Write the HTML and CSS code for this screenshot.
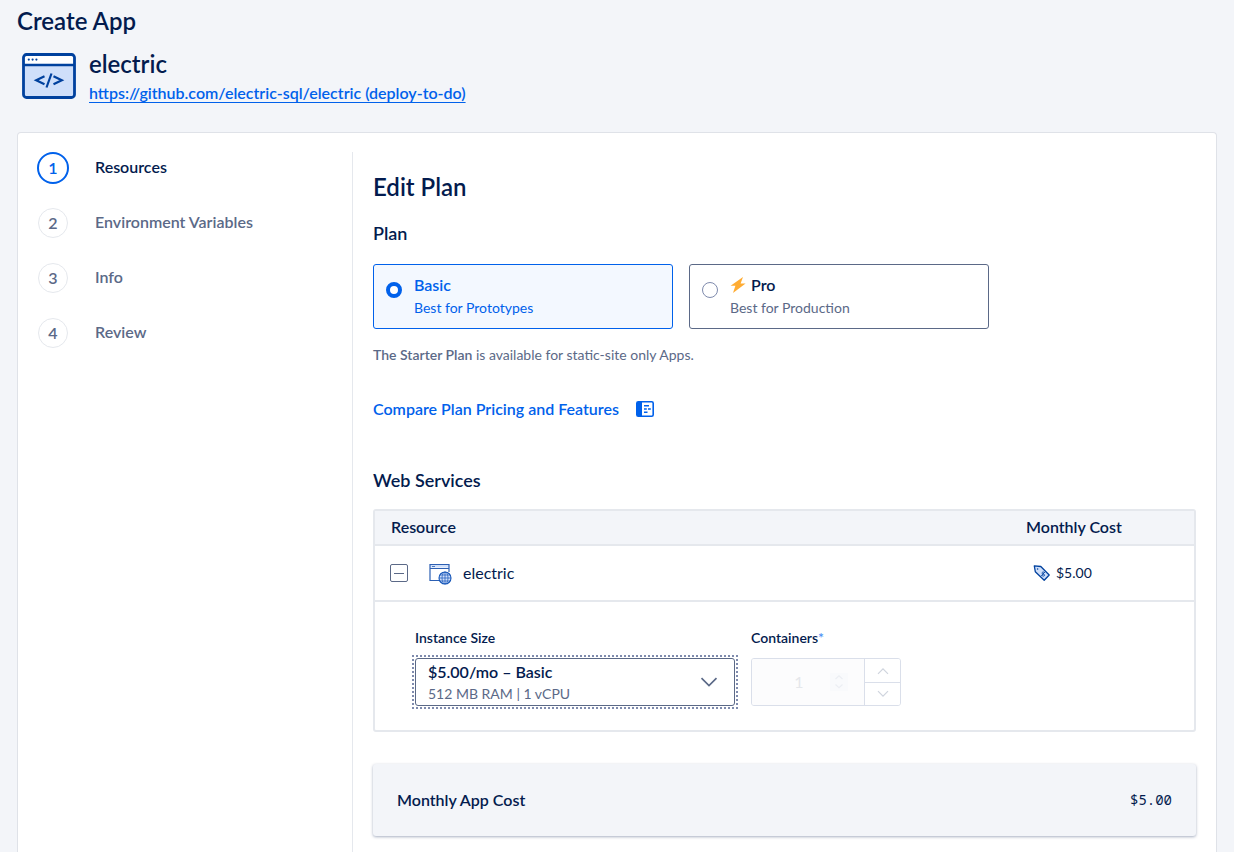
FILE: index.html
```html
<!DOCTYPE html>
<html lang="en">
<head>
<meta charset="utf-8">
<meta name="viewport" content="width=device-width, initial-scale=1">
<title>Create App</title>
<link rel="stylesheet" href="styles.css">
</head>
<body>
<header class="page-header">
  <h1 class="page-title">Create App</h1>
  <div class="app">
    <svg class="app-icon" viewBox="0 0 54 46" aria-hidden="true">
      <rect x="1.5" y="1.5" width="51" height="43" rx="3" fill="#cfdffa"/>
      <path d="M2 12V4a2 2 0 0 1 2-2h46a2 2 0 0 1 2 2v8z" fill="#fff"/>
      <rect x="1.5" y="1.5" width="51" height="43" rx="3" fill="none" stroke="#00419e" stroke-width="2.8"/>
      <path d="M2 12h50" stroke="#00419e" stroke-width="2.4"/>
      <g fill="#00419e"><circle cx="6.8" cy="6.6" r="1.1"/><circle cx="10.6" cy="6.6" r="1.1"/><circle cx="14.4" cy="6.6" r="1.1"/></g>
      <path d="M22.5 23.2l-8.3 4 8.3 4M31.500 23.200l8.300 4-8.300 4M29.500 20.500l-5 14" fill="none" stroke="#00419e" stroke-width="2.2"/>
    </svg>
    <div>
      <h2 class="app-name">electric</h2>
      <a class="app-link" href="#">https://github.com/electric-sql/electric (deploy-to-do)</a>
    </div>
  </div>
</header>

<div class="card">
  <nav aria-label="Steps">
    <ol class="steps">
      <li class="step step-active" aria-current="step"><span class="step-cell"><span class="step-number">1</span></span>Resources</li>
      <li class="step"><span class="step-cell"><span class="step-number">2</span></span>Environment Variables</li>
      <li class="step"><span class="step-cell"><span class="step-number">3</span></span>Info</li>
      <li class="step"><span class="step-cell"><span class="step-number">4</span></span>Review</li>
    </ol>
  </nav>

  <main class="main">
    <h2 class="main-title">Edit Plan</h2>
    <h3 class="section-title" id="plan-title">Plan</h3>
    <div class="plans" role="radiogroup" aria-labelledby="plan-title">
      <label class="plan plan-selected">
        <input class="radio" type="radio" name="plan" checked>
        <span class="plan-text"><span class="plan-name">Basic</span><span class="plan-note">Best for Prototypes</span></span>
      </label>
      <label class="plan">
        <input class="radio" type="radio" name="plan">
        <span class="plan-text">
          <span class="plan-name"><svg class="bolt" viewBox="0 0 16 16" aria-hidden="true"><path d="M13 0L.6 8.800h4.800L3 16 15.600 6.400h-5z" fill="#ffac33"/></svg>Pro</span>
          <span class="plan-note">Best for Production</span>
        </span>
      </label>
    </div>
    <p class="starter"><strong>The Starter Plan</strong> is available for static-site only Apps.</p>
    <a class="compare" href="#">Compare Plan Pricing and Features
      <svg class="compare-icon" viewBox="0 0 20 18" aria-hidden="true">
        <rect x="1.800" y="1.800" width="16.400" height="14.400" rx="1.500" fill="none" stroke="#0061eb" stroke-width="1.600"/>
        <path d="M2 2h5v14H2z" fill="#0061eb"/>
        <path d="M9 5.800h5M9 9h2.800M13 9h2.800M9 12.200h3.500" stroke="#0061eb" stroke-width="1.500"/>
      </svg>
    </a>

    <h3 class="section-title services-title">Web Services</h3>
    <table class="services">
      <thead>
        <tr><th scope="col">Resource</th><th scope="col" class="cost-col">Monthly Cost</th></tr>
      </thead>
      <tbody>
        <tr class="service-row">
          <td>
            <div class="service">
              <button class="collapse" type="button" aria-label="Collapse electric" aria-expanded="true"></button>
              <svg class="service-icon" viewBox="0 0 24 24" aria-hidden="true">
                <path d="M2 3h19v3.500H2z" fill="#cfdffa"/>
                <path d="M11 19.500H2V3.500h19V11M2 7.500h19" fill="none" stroke="#2c5fb3" stroke-width="1.200"/>
                <path d="M4 5.500h3" stroke="#2c5fb3" stroke-width=".8"/>
                <circle cx="17" cy="17" r="6" fill="#cfdffa" stroke="#1455b8" stroke-width="1.100"/>
                <path d="M11 17h12M17 11v12M12 14h10M12 20h10" stroke="#1455b8" stroke-width=".7"/>
                <ellipse cx="17" cy="17" rx="3" ry="6" fill="none" stroke="#1455b8" stroke-width=".7"/>
              </svg>
              <span>electric</span>
            </div>
          </td>
          <td class="cost-col">
            <div class="price">
              <svg class="tag" viewBox="0 0 18 18" aria-hidden="true">
                <path d="M1.300 1.800l6.500.7 8.400 8.500-5 5.200-8.900-8.500z" fill="#cfdffa" stroke="#00419e" stroke-width="1.300" stroke-linejoin="round"/>
                <circle cx="4.600" cy="5" r=".8" fill="#00419e"/>
                <path d="M11.500 8.500c-1.300-1-2.600-.4-2.400.8.300 1.300 2.400.4 2.500 1.800 0 1.200-1.700 1.300-2.800.2M12 7.800l-3.700 4.200" fill="none" stroke="#00419e" stroke-width=".9"/>
              </svg>
              $5.00
            </div>
          </td>
        </tr>
        <tr>
          <td colspan="2" class="details">
            <div class="fields">
              <div class="field">
                <label class="field-label" for="size">Instance Size</label>
                <div class="select">
                  <select id="size" class="select-control"><option>$5.00/mo – Basic</option></select>
                  <span class="select-note">512 MB RAM | 1 vCPU</span>
                  <svg class="select-arrow" viewBox="0 0 18 10" aria-hidden="true"><path d="M1.500 1.200L9 8.500l7.500-7.300" fill="none" stroke="#5b6987" stroke-width="1.700"/></svg>
                </div>
              </div>
              <div class="field">
                <label class="field-label" for="containers">Containers<span class="required">*</span></label>
                <div class="stepper">
                  <div class="stepper-value">
                    <input id="containers" class="stepper-input" type="text" inputmode="numeric" value="1" disabled>
                    <svg class="spin" viewBox="0 0 18 18" aria-hidden="true"><path d="M0 0h18v18H0z" fill="#f9fafc"/><path d="M5.500 6L9 2.800 12.500 6M5.500 11.500L9 14.700l3.500-3.200" fill="none" stroke="#eceef3" stroke-width="1.200"/></svg>
                  </div>
                  <div class="stepper-buttons">
                    <button class="stepper-button" type="button" aria-label="Increase" disabled><svg viewBox="0 0 12 8" aria-hidden="true"><path d="M1 6.800l5-5 5 5"/></svg></button>
                    <button class="stepper-button" type="button" aria-label="Decrease" disabled><svg viewBox="0 0 12 8" aria-hidden="true"><path d="M1 1.200l5 5 5-5"/></svg></button>
                  </div>
                </div>
              </div>
            </div>
          </td>
        </tr>
      </tbody>
    </table>

    <section class="total">
      <span class="total-label">Monthly App Cost</span>
      <span class="total-value">$5.00</span>
    </section>
  </main>
</div>
</body>
</html>
```
FILE: styles.css
```css
*, *::before, *::after { box-sizing: border-box; }
h1, h2, h3, p, ol { margin: 0; padding: 0; font-weight: 600; }

body {
  margin: 0;
  padding: 0 17px;
  min-height: 100vh;
  display: flex;
  flex-direction: column;
  background: #f3f5f9;
  color: #031b4e;
  font-family: Lato, "Liberation Sans", sans-serif;
  font-size: 16px;
  line-height: 24px;
}
input, select, button { font: inherit; color: inherit; }
a { color: #0061eb; font-weight: 600; }

.page-header { padding: 5px 0 26px; }
.page-title, .app-name, .main-title { font-size: 24px; line-height: 32px; }
.app { display: flex; align-items: flex-start; gap: 13px; padding: 11px 0 0 5px; }
.app-icon { width: 54px; height: 46px; margin-top: 5px; }
.app-link { display: block; line-height: 26px; text-underline-offset: 3px; }

.card {
  flex: 1;
  display: grid;
  grid-template-columns: 315px minmax(0, 1fr);
  padding: 19px 20px 0 19px;
  background: #fff;
  border: 1px solid #dfe2e8;
  border-bottom: 0;
  border-radius: 4px 4px 0 0;
}

.steps { list-style: none; display: grid; gap: 23px; }
.step { display: flex; align-items: flex-start; gap: 26px; color: #5b6987; font-weight: 600; line-height: 30px; }
.step-cell { width: 32px; height: 32px; display: grid; place-items: center; }
.step-number {
  width: 30px;
  height: 30px;
  border: 1px solid #e5e8ed;
  border-radius: 50%;
  line-height: 28px;
  text-align: center;
}
.step-active { color: #031b4e; }
.step-active .step-number { width: 32px; height: 32px; border: 2px solid #0061eb; color: #0061eb; }

.main { padding: 19px 0 16px 20px; border-left: 1px solid #e5e8ed; }
.section-title { margin-top: 18px; font-size: 18px; }

.plans { display: flex; flex-wrap: wrap; gap: 16px; margin-top: 19px; }
.plan {
  flex: 0 1 300px;
  display: flex;
  gap: 12px;
  padding: 8px 12px;
  border: 1px solid #5b6987;
  border-radius: 3px;
}
.plan-text, .plan-name { display: flex; }
.plan-text { flex-direction: column; }
.plan-name { align-items: center; gap: 5px; font-weight: 600; }
.plan-note { padding-bottom: 1px; font-size: 14px; line-height: 22px; color: #5b6987; }
.plan-selected { background: #f3f8ff; border-color: #0061eb; }
.plan-selected .plan-name, .plan-selected .plan-note { color: #0061eb; }
.bolt { width: 16px; height: 16px; }
.radio {
  appearance: none;
  flex: none;
  width: 16px;
  height: 16px;
  margin: 9px 0 0;
  border: 1px solid #7f8bad;
  border-radius: 50%;
  background: #fff;
}
.radio:checked { border: 4px solid #0061eb; }

.starter { margin-top: 16px; font-size: 14px; line-height: 20px; font-weight: 400; color: #5b6987; }
.starter strong { font-weight: 600; }
.compare { display: flex; align-items: center; gap: 16px; margin-top: 32px; text-decoration: none; }
.compare-icon { width: 20px; height: 18px; }
.services-title { margin-top: 47px; }

.services {
  width: 100%;
  margin-top: 17px;
  border: 2px solid #e5e8ed;
  border-radius: 3px;
  border-spacing: 0;
}
.services th, .services td { padding: 0 16px; text-align: left; }
.services th { padding-top: 4px; padding-bottom: 5px; background: #f3f5f9; border-bottom: 2px solid #e5e8ed; font-weight: 600; }
.services .cost-col { width: 184px; }
.services .service-row td { padding: 15px; border-bottom: 2px solid #e5e8ed; }
.service { display: flex; align-items: center; }
.collapse {
  width: 18px;
  height: 18px;
  margin-right: 20px;
  display: grid;
  place-items: center;
  padding: 0;
  border: 1px solid #5b6987;
  border-radius: 2px;
  background: #fff;
}
.collapse::before { content: ""; width: 10px; height: 1px; background: #5b6987; }
.service-icon { width: 24px; height: 24px; margin-right: 11px; }
.price { display: flex; align-items: center; gap: 5px; padding-left: 8px; font-size: 14px; }
.tag { width: 18px; height: 18px; }

.services .details { padding: 24px 40px; }
.fields { display: flex; flex-wrap: wrap; gap: 16px; }
.field { flex: 0 1 320px; }
.field + .field { flex-basis: 150px; }
.field-label { display: block; font-size: 14px; font-weight: 600; margin-bottom: 8px; }
.required { color: #4a90f5; line-height: 1; }

.select { display: grid; grid-template-columns: minmax(0, 1fr) 50px; outline: 2px dotted #7f8bad; outline-offset: 1px; }
.select-control {
  grid-area: 1 / 1 / 2 / 3;
  appearance: none;
  height: 48px;
  width: 100%;
  padding: 0 50px 21px 12px;
  border: 1px solid #5b6987;
  border-radius: 3px;
  background: #fff;
  font-weight: 600;
}
.select-note { grid-area: 1 / 1; align-self: end; padding: 0 0 2px 13px; line-height: 20px; font-size: 14px; color: #5b6987; pointer-events: none; }
.select-arrow { grid-area: 1 / 2; align-self: center; margin-left: 15px; width: 18px; height: 10px; pointer-events: none; }

.stepper { display: flex; height: 48px; border: 1px solid #dadfea; border-radius: 3px; overflow: hidden; }
.stepper-value { flex: 1; display: grid; align-items: center; background: #fcfcfd; }
.stepper-input { grid-area: 1 / 1; width: 100%; border: 0; padding: 0 18px 1px 0; background: none; text-align: center; color: #e5e7eb; }
.spin { grid-area: 1 / 1; justify-self: end; width: 18px; height: 18px; margin-right: 16px; }
.stepper-buttons { display: grid; grid-template-rows: 1fr 1fr; width: 36px; border-left: 1px solid #dadfea; }
.stepper-button { display: grid; place-items: center; padding: 0; border: 0; background: #fff; }
.stepper-button + .stepper-button { border-top: 1px solid #dadfea; }
.stepper-button svg { width: 12px; height: 8px; fill: none; stroke: #cfd4de; stroke-width: 1.2; }

.total {
  display: flex;
  align-items: center;
  justify-content: space-between;
  margin-top: 32px;
  padding: 24px;
  background: #f3f5f9;
  border-radius: 3px;
  box-shadow: 0 1px 3px rgba(3, 27, 78, 0.35);
}
.total-label { font-weight: 600; }
.total-value { font-family: "Noto Sans Mono", "DejaVu Sans Mono", monospace; font-size: 14px; }
```
